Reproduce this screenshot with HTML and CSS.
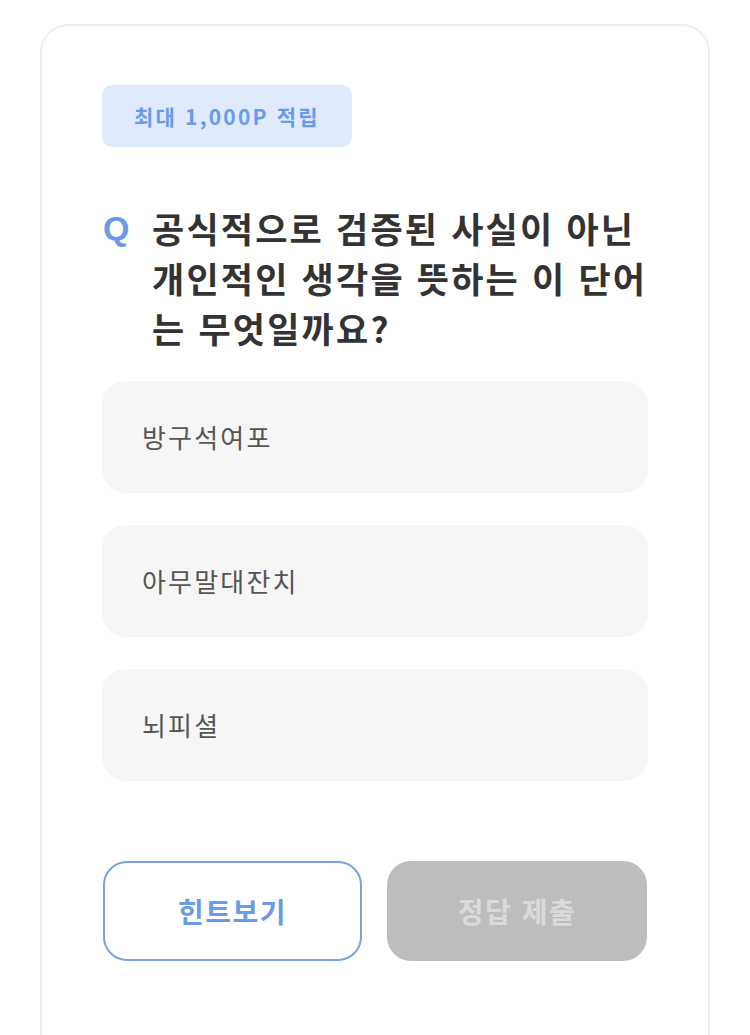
FILE: index.html
```html
<!DOCTYPE html>
<html lang="ko">
<head>
    <meta charset="UTF-8">
    <meta name="viewport" content="width=device-width, initial-scale=1.0">
    <title>퀴즈</title>
    <link rel="stylesheet" href="styles.css">
</head>
<body>
    <div class="quiz-card">
        <span class="reward-badge">최대 1,000P 적립</span>

        <div class="question">
            <span class="question-mark">Q</span>
            <p class="question-text">공식적으로 검증된 사실이 아닌<br>개인적인 생각을 뜻하는 이 단어<br>는 무엇일까요?</p>
        </div>

        <ul class="options">
            <li class="option">방구석여포</li>
            <li class="option">아무말대잔치</li>
            <li class="option">뇌피셜</li>
        </ul>

        <div class="actions">
            <button class="btn btn-hint">힌트보기</button>
            <button class="btn btn-submit" disabled>정답 제출</button>
        </div>
    </div>
</body>
</html>
```

FILE: styles.css
```css
*{
    box-sizing: border-box;
    font-family: "Noto Sans CJK KR", "Noto Sans", sans-serif;
}
body{
    margin: 0;
    background: #fff;
}
.quiz-card{
    margin: 24px 40px 0 40px;
    padding: 59px 60px 80px 60px;
    border: 2px solid #eeeeee;
    border-radius: 28px;
    min-height: 1040px;
}
.reward-badge{
    display: inline-block;
    padding: 0 32px;
    height: 62px;
    line-height: 62px;
    border-radius: 10px;
    background-color: #dfeafc;
    color: #6a9be6;
    font-size: 21px;
    font-weight: 700;
    letter-spacing: 2.2px;
}
.question{
    display: flex;
    margin-top: 56px;
}
.question-mark{
    width: 50px;
    flex-shrink: 0;
    padding-left: 1px;
    color: #6a9be6;
    font-family: "Liberation Sans", Arial, sans-serif;
    font-size: 34px;
    font-weight: 700;
    line-height: 50px;
}
.question-text{
    margin: 0;
    color: #333333;
    font-size: 35px;
    font-weight: 700;
    line-height: 50px;
    letter-spacing: 2.2px;
    white-space: nowrap;
}
.options{
    list-style: none;
    margin: 28px 0 0 0;
    padding: 0;
    display: flex;
    flex-direction: column;
    gap: 32px;
}
.option{
    height: 112px;
    line-height: 112px;
    padding-left: 40px;
    border-radius: 24px;
    background-color: #f6f6f6;
    color: #555555;
    font-size: 26px;
    letter-spacing: 2.2px;
}
.actions{
    display: flex;
    gap: 25px;
    margin: 80px 0 0 1px;
}
.btn{
    height: 100px;
    border-radius: 24px;
    font-size: 28px;
    font-weight: 700;
    letter-spacing: 1.5px;
}
.btn-hint{
    width: 259px;
    background: #fff;
    border: 2px solid #7ba2d9;
    color: #6a9be6;
}
.btn-submit{
    width: 260px;
    background: #bdbdbd;
    border: none;
    color: #dadada;
}
```
